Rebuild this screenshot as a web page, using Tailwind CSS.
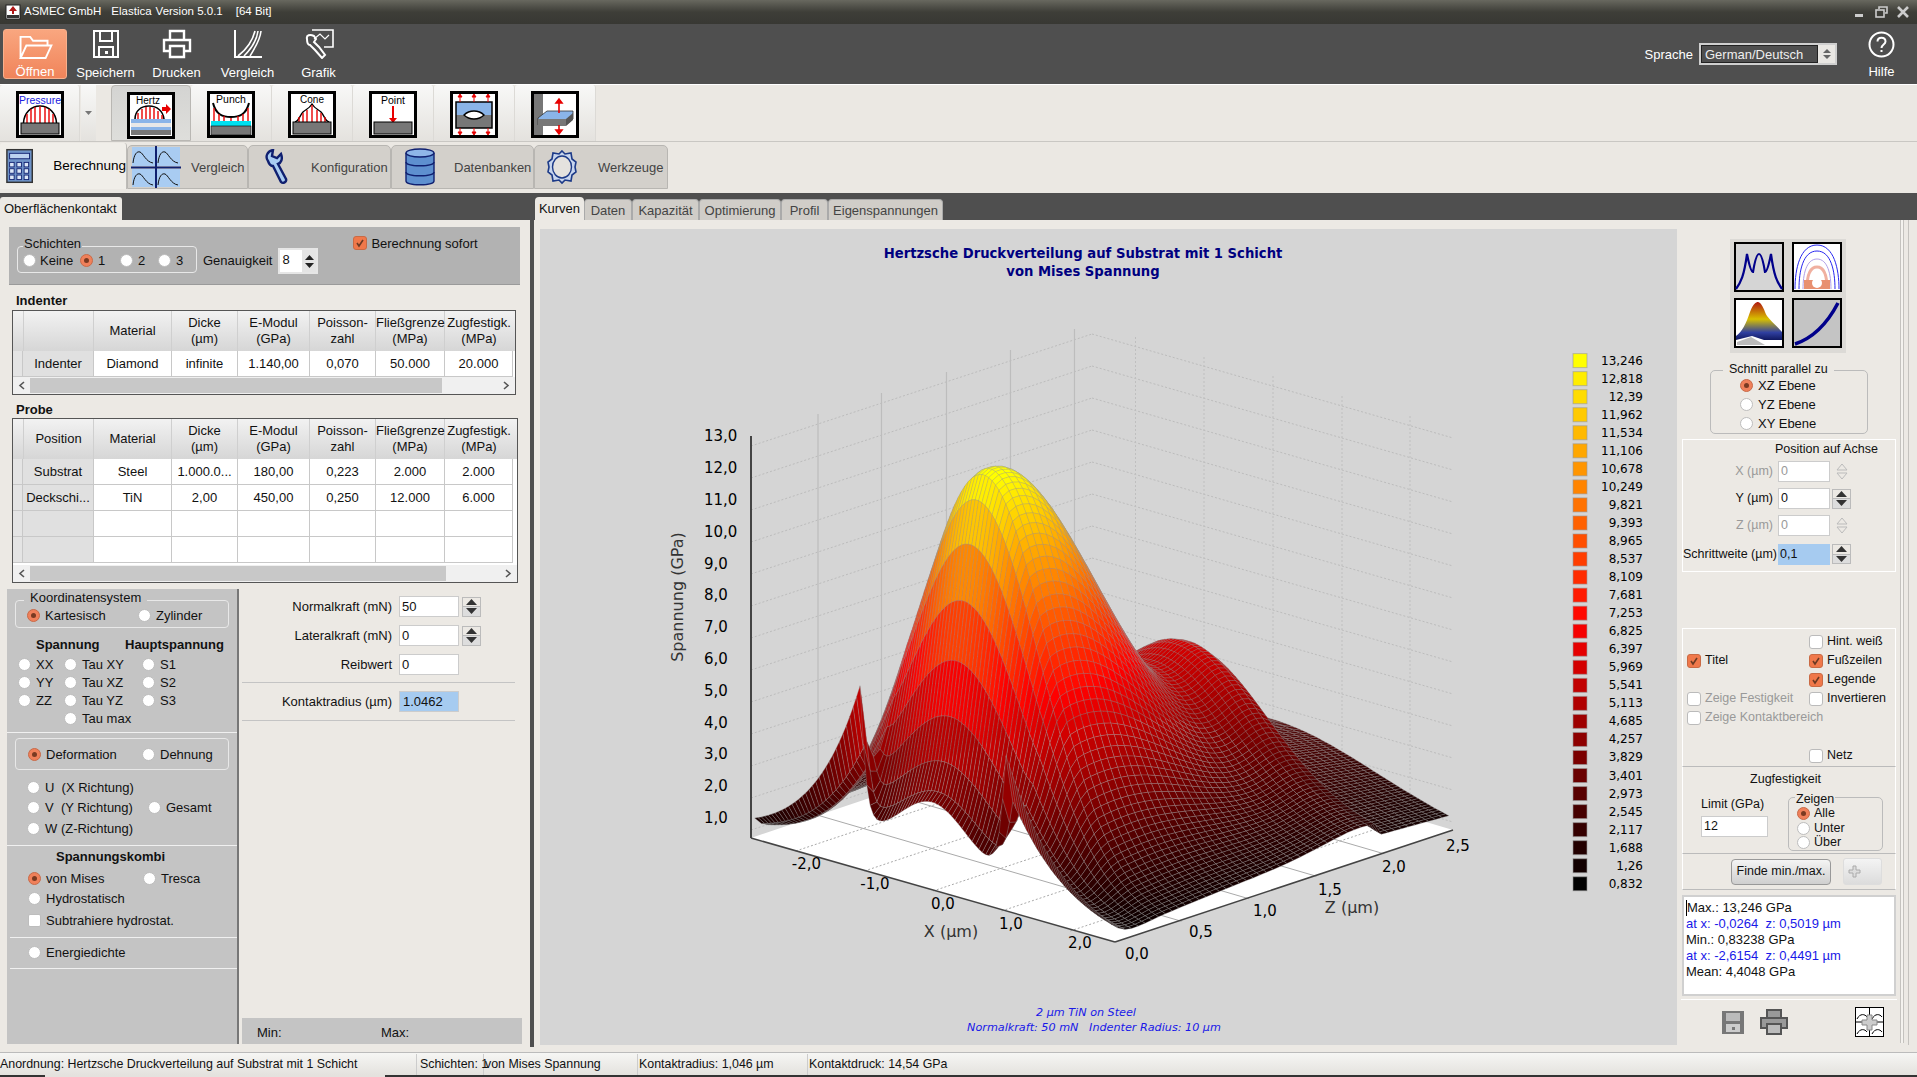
<!DOCTYPE html>
<html lang="de">
<head>
<meta charset="UTF-8" />
<title>ASMEC GmbH Elastica</title>
<script src="https://cdn.jsdelivr.net/npm/@tailwindcss/browser@4"></script>
</head>
<body class="w-[1917px] h-[1077px] overflow-hidden bg-[#4f4f4f] text-[13px] leading-none text-[#111] font-['Liberation_Sans',Arial,sans-serif]">

<!-- Title bar -->
<div class="h-[24px] flex items-center bg-linear-to-b from-[#68685f] via-[#3e3e38] to-[#383833] text-white text-[11.500px]">
  <svg class="ml-[5px] mr-[3px]" width="16" height="16" viewBox="0 0 16 16"><rect x="1" y="1" width="14" height="14" fill="#fff" stroke="#222"/><path d="M8 2l4 5H9v3H7V7H4z" fill="#b01818"/><rect x="2" y="11" width="12" height="3" fill="#333"/></svg>
  <span class="mr-[10px]">ASMEC GmbH</span><span class="mr-[4px]">Elastica</span><span class="mr-[13px]">Version 5.0.1</span><span>[64 Bit]</span>
  <div class="ml-auto flex items-center gap-[9px] mr-[8px]">
    <svg width="12" height="12" viewBox="0 0 12 12"><rect x="1" y="8" width="8" height="3" fill="#ccc"/></svg>
    <svg width="13" height="12" viewBox="0 0 13 12" fill="none" stroke="#ccc" stroke-width="1.6"><rect x="1" y="4" width="8" height="7"/><path d="M4 3V1h8v6h-2"/></svg>
    <svg width="12" height="12" viewBox="0 0 12 12" stroke="#ccc" stroke-width="2.6"><path d="M1 1l10 10M11 1L1 11"/></svg>
  </div>
</div>

<!-- Ribbon -->
<div class="h-[60px] flex items-center bg-[#4f4f4f] text-white text-[13px]">
  <button class="ml-[3px] mr-[3px] w-[64px] h-[50px] flex flex-col items-center pt-[4px] rounded-[3px] border border-[#f7b08d] bg-linear-to-b from-[#f9a67f] to-[#f0845a]">
    <svg width="36" height="27" viewBox="0 0 36 27" fill="none" stroke="#fff" stroke-width="2"><path d="M3 25V3h10l3 4h15v5M3 25l6-13h26l-6 13z"/></svg>
    <span class="mt-[5px]">Öffnen</span>
  </button>
  <button class="w-[71px] flex flex-col items-center">
    <svg width="28" height="30" viewBox="0 0 28 30" fill="none" stroke="#fff" stroke-width="2"><path d="M2 2h24v26H2z"/><path d="M8 2v10h12V2"/><path d="M7 28V18h14v10"/><rect x="13" y="22" width="3" height="3" fill="#fff" stroke="none"/></svg>
    <span class="mt-[7px]">Speichern</span>
  </button>
  <button class="w-[71px] flex flex-col items-center">
    <svg width="30" height="30" viewBox="0 0 30 30" fill="none" stroke="#fff" stroke-width="2.4"><path d="M8 11V2h14v9"/><path d="M8 22H2V11h26v11h-6"/><path d="M8 17h14v11H8z"/></svg>
    <span class="mt-[7px]">Drucken</span>
  </button>
  <button class="w-[71px] flex flex-col items-center">
    <svg width="30" height="30" viewBox="0 0 30 30" fill="none" stroke="#fff" stroke-width="1.6"><path d="M2 1v27h27" stroke-width="2"/><path d="M5 27C14 20 20 10 22 2M11 27C18 20 24 10 25 2M17 27C21 20 27 12 28 2"/></svg>
    <span class="mt-[7px]">Vergleich</span>
  </button>
  <button class="w-[71px] flex flex-col items-center">
    <svg width="30" height="30" viewBox="0 0 30 30" fill="none" stroke="#fff" stroke-width="1.6"><path d="M8 1h21v17h-9"/><path d="M10 10l6-5 5 5 4-4" stroke-width="1.2"/><path d="M3 10c-1-4 3-5 7-3l2 3-2 3 5 5 6 8-3 3-7-8-5-5c-2 0-3-3-3-6z" stroke-width="2"/></svg>
    <span class="mt-[7px]">Grafik</span>
  </button>
  <div class="ml-auto flex items-center mr-[14px]">
    <span class="mr-[6px]">Sprache</span>
    <div class="w-[138px] h-[22px] border-2 border-[#cfcfcf] flex bg-[#4f4f4f]">
      <span class="flex-1 border border-[#222] flex items-center pl-[3px] text-[#eee]">German/Deutsch</span>
      <span class="w-[17px] bg-[#e9e7e3] flex flex-col items-center justify-center gap-[2px]">
        <svg width="8" height="4" viewBox="0 0 8 4"><path d="M0 4L4 0l4 4z" fill="#666"/></svg>
        <svg width="8" height="4" viewBox="0 0 8 4"><path d="M0 0l4 4 4-4z" fill="#666"/></svg>
      </span>
    </div>
    <div class="w-[45px] ml-[22px] -mr-[1px] flex flex-col items-center">
      <svg width="27" height="27" viewBox="0 0 27 27" fill="none" stroke="#fff" stroke-width="2"><circle cx="13.5" cy="13.5" r="12"/><path d="M9.5 10.5c0-5 8-5 8 0 0 3-4 3-4 6.5"/><rect x="12.5" y="19" width="2" height="2" fill="#fff" stroke="none"/></svg>
      <span class="mt-[7px]">Hilfe</span>
    </div>
  </div>
</div>
<div class="h-px bg-white"></div>

<!-- Toolbar -->
<div class="h-[57px] flex bg-[#ebe8e3] border-b border-[#c9c7c3]">
  <div class="w-[80px] h-[56px] pt-[6px] flex justify-center rounded-t-[3px] bg-linear-to-b from-[#f8f8f7] to-[#e4e2de] border-r border-[#dcdad6]">
    <svg width="48" height="47" viewBox="0 0 48 47"><rect x="1.5" y="1.5" width="45" height="44" fill="#fff" stroke="#000" stroke-width="3"/><text x="24" y="13" text-anchor="middle" font-size="10.500" fill="#2020e0" font-family="Liberation Sans">Pressure</text><path d="M7.5 32C8 22 15 15 24 15s16 7 16.500 17" fill="none" stroke="#000" stroke-width="1.6"/><path d="M11 32V23M15 32V18M19 32V16M24 32V15M29 32V16M33 32V18M37 32V23" stroke="#e80000" stroke-width="1.4"/><rect x="5" y="32" width="38" height="11" fill="#777" stroke="#000"/></svg>
  </div>
  <div class="w-[15px] h-[56px] ml-[1px] flex items-center justify-center bg-linear-to-b from-[#f8f8f7] to-[#e4e2de]">
    <svg width="7" height="4" viewBox="0 0 7 4"><path d="M0 0h7L3.500 4z" fill="#777"/></svg>
  </div>
  <div class="w-[15px]"></div>
  <div class="w-[80px] h-[56px] pt-[6px] flex justify-center rounded-t-[4px] bg-linear-to-b from-[#d4d4d2] to-[#dededb] border border-[#b9b7b3]">
    <svg width="48" height="47" viewBox="0 0 48 47"><rect x="1.5" y="1.500" width="45" height="44" fill="#fff" stroke="#000" stroke-width="3"/><text x="21" y="12" text-anchor="middle" font-size="10" font-family="Liberation Sans">Hertz</text><path d="M8 27C8 19 14 14 22 14s14 5 15 13" fill="none" stroke="#000" stroke-width="1.6"/><path d="M11 27V21M15 27V17M19 27V15M23 27V15M27 27V16M31 27V19M35 27V23" stroke="#e80000" stroke-width="1.4"/><path d="M35 15h4v-3l5 5-5 5v-3h-4z" fill="#e80000"/><rect x="4" y="27" width="40" height="4" fill="#8ab4e8"/><rect x="4" y="31" width="40" height="4" fill="#e8e8e8"/><rect x="4" y="35" width="40" height="3" fill="#8ab4e8"/><rect x="4" y="38" width="40" height="5" fill="#777"/></svg>
  </div>
  <div class="w-[81px] h-[56px] pt-[6px] flex justify-center rounded-t-[3px] bg-linear-to-b from-[#f8f8f7] to-[#e4e2de] border-r border-[#dcdad6]">
    <svg width="48" height="47" viewBox="0 0 48 47"><rect x="1.5" y="1.5" width="45" height="44" fill="#fff" stroke="#000" stroke-width="3"/><text x="24" y="12" text-anchor="middle" font-size="10.500" font-family="Liberation Sans">Punch</text><path d="M6 12C9 24 16 26 24 26s15-2 18-14" fill="none" stroke="#000" stroke-width="2"/><path d="M7 30V17M12 30V23M17 30V25M24 30V27M31 30V25M36 30V23M41 30V17" stroke="#e80000" stroke-width="1.4"/><rect x="4" y="30" width="40" height="5" fill="#00e0f0"/><rect x="4" y="35" width="40" height="9" fill="#777" stroke="#000" stroke-width=".6"/></svg>
  </div>
  <div class="w-[81px] h-[56px] pt-[6px] flex justify-center rounded-t-[3px] bg-linear-to-b from-[#f8f8f7] to-[#e4e2de] border-r border-[#dcdad6]">
    <svg width="48" height="47" viewBox="0 0 48 47"><rect x="1.5" y="1.5" width="45" height="44" fill="#fff" stroke="#000" stroke-width="3"/><text x="24" y="12" text-anchor="middle" font-size="10" font-family="Liberation Sans">Cone</text><path d="M7 31C11 30 12 24 15 21S21 18 24 13c3 5 6 5 9 8s4 9 8 10" fill="none" stroke="#000" stroke-width="1.4"/><path d="M11 31V26M15 31V22M19 31V19M24 31V14M29 31V19M33 31V22M37 31V26" stroke="#e80000" stroke-width="1.4"/><rect x="5" y="31" width="38" height="12" fill="#777" stroke="#000"/></svg>
  </div>
  <div class="w-[81px] h-[56px] pt-[6px] flex justify-center rounded-t-[3px] bg-linear-to-b from-[#f8f8f7] to-[#e4e2de] border-r border-[#dcdad6]">
    <svg width="48" height="47" viewBox="0 0 48 47"><rect x="1.5" y="1.5" width="45" height="44" fill="#fff" stroke="#000" stroke-width="3"/><text x="24" y="13" text-anchor="middle" font-size="10.500" font-family="Liberation Sans">Point</text><path d="M23 15h2v12h3l-4 5-4-5h3z" fill="#e80000"/><rect x="5" y="31" width="38" height="12" fill="#777" stroke="#000"/></svg>
  </div>
  <div class="w-[81px] h-[56px] pt-[6px] flex justify-center rounded-t-[3px] bg-linear-to-b from-[#f8f8f7] to-[#e4e2de] border-r border-[#dcdad6]">
    <svg width="48" height="47" viewBox="0 0 48 47"><rect x="1.5" y="1.5" width="45" height="44" fill="#fff" stroke="#000" stroke-width="3"/><rect x="6" y="11" width="36" height="13" fill="#8ab4e8"/><rect x="6" y="24" width="36" height="13" fill="#777"/><rect x="6" y="11" width="36" height="26" fill="none" stroke="#000" stroke-width="1.5"/><path d="M14 24c3-3 6-4 10-4s7 1 10 4c-3 3-6 4-10 4s-7-1-10-4z" fill="#fff" stroke="#000" stroke-width="1.4"/><path d="M10 11V5M8 6l2-3 2 3zM24 11V5M22 6l2-3 2 3zM38 11V5M36 6l2-3 2 3zM10 37v5M8 41l2 3 2-3zM24 37v5M22 41l2 3 2-3zM38 37v5M36 41l2 3 2-3z" stroke="#e80000" fill="#e80000"/></svg>
  </div>
  <div class="w-[81px] h-[56px] pt-[6px] flex justify-center rounded-t-[3px] bg-linear-to-b from-[#f8f8f7] to-[#e4e2de] border-r border-[#dcdad6]">
    <svg width="48" height="47" viewBox="0 0 48 47"><rect x="1.5" y="1.5" width="45" height="44" fill="#fff" stroke="#000" stroke-width="3"/><rect x="3" y="3" width="9" height="41" fill="#777"/><path d="M7 27l9-7h26v8l-7 6H7z" fill="#8ab4e8" stroke="#333" stroke-width=".8"/><path d="M7 28h28v7H7z" fill="#777"/><path d="M35 28l7-6v7l-7 6z" fill="#555"/><path d="M28 22V10M25 12l3-4 3 4zM28 34v8M25 39l3 4 3-4z" stroke="#e80000" fill="#e80000" stroke-width="1.6"/></svg>
  </div>
</div>

<!-- Main tabs -->
<div class="h-[51px] pt-[3px] bg-[#ebe8e3] flex items-start">
  <div class="w-[127px] h-[46px] -mt-[2px] pl-[6px] flex items-center bg-[#f0eee9] rounded-t-[3px] border-r border-[#bdbbb7] text-black text-[13.5px]">
    <svg width="30" height="38" viewBox="0 0 30 38"><rect x="1" y="1" width="28" height="36" fill="#6f93c8" stroke="#333" stroke-width="1.6"/><rect x="4" y="5" width="22" height="6" fill="#bcd2f0" stroke="#102070"/><g fill="#dbe7f7" stroke="#102070"><rect x="4" y="15" width="5" height="5"/><rect x="12" y="15" width="5" height="5"/><rect x="20" y="15" width="5" height="5"/><rect x="4" y="22" width="5" height="5"/><rect x="12" y="22" width="5" height="5"/><rect x="20" y="22" width="5" height="5"/><rect x="4" y="29" width="5" height="5"/><rect x="12" y="29" width="5" height="5"/><rect x="20" y="29" width="5" height="5"/></g></svg>
    <span class="ml-[20px]">Berechnung</span>
  </div>
  <div class="w-[121px] h-[44px] flex items-center bg-[#d3d0cb] rounded-t-[5px] border border-[#b8b6b2] text-[#444]">
    <svg class="ml-[3px]" width="50" height="42" viewBox="0 0 50 42"><rect x="1" y="1" width="23" height="19" fill="#a9ccf2"/><rect x="26" y="1" width="23" height="19" fill="#a9ccf2"/><rect x="1" y="23" width="23" height="18" fill="#a9ccf2"/><rect x="26" y="23" width="23" height="18" fill="#a9ccf2"/><path d="M2 17C3 8 6 5 9 6s6 10 13 11M27 17c1-9 4-12 7-11s6 10 13 11M2 39c1-9 4-12 7-11s6 10 13 11M27 39c1-9 4-12 7-11s6 10 13 11" fill="none" stroke="#111" stroke-width="1"/><path d="M0 21.500h50M25 0v42" stroke="#102070" stroke-width="2"/></svg>
    <span class="ml-[10px]">Vergleich</span>
  </div>
  <div class="w-[143px] h-[44px] flex items-center bg-[#d3d0cb] rounded-t-[5px] border border-[#b8b6b2] text-[#444]">
    <svg class="ml-[15px]" width="26" height="36" viewBox="0 0 26 36"><path d="M4 12C1 8 3 2 9 1l-1 6 5 2 4-4c2 5 0 9-3 10l8 15c1 3-3 5-5 3l-8-16c-2 0-4-2-5-5z" fill="#a9ccf2" stroke="#102070" stroke-width="2.4"/></svg>
    <span class="ml-[21px]">Konfiguration</span>
  </div>
  <div class="w-[143px] h-[44px] flex items-center bg-[#d3d0cb] rounded-t-[5px] border border-[#b8b6b2] text-[#444]">
    <svg class="ml-[13px]" width="30" height="38" viewBox="0 0 30 38" fill="#5e90d0" stroke="#102070" stroke-width="1.4"><path d="M1 5v28c0 5 28 5 28 0V5"/><ellipse cx="15" cy="5" rx="14" ry="4" fill="#8fb6e8"/><path d="M1 14c0 5 28 5 28 0M1 24c0 5 28 5 28 0" fill="none"/></svg>
    <span class="ml-[19px]">Datenbanken</span>
  </div>
  <div class="w-[134px] h-[44px] flex items-center bg-[#d3d0cb] rounded-t-[5px] border border-[#b8b6b2] text-[#444]">
    <svg class="ml-[11px]" width="32" height="36" viewBox="0 0 32 36" fill="none" stroke="#1c3a88"><path d="M16 2l3 3 6-1 1 6 4 3-1 5 1 5-4 3-1 6-6-1-3 3-3-3-6 1-1-6-4-3 1-5-1-5 4-3 1-6 6 1z" stroke-width="1.600" fill="#c8d6ee"/><ellipse cx="16" cy="18" rx="9.500" ry="11" fill="#e4e2de" stroke-width="1.400"/></svg>
    <span class="ml-[20px]">Werkzeuge</span>
  </div>
</div>

<!-- Main area -->
<div class="h-[854px] flex bg-[#4f4f4f]">
  <!-- Left pane -->
  <div class="w-[530px]">
    <div class="h-[27px] flex items-end">
      <div class="w-[122px] h-[23px] flex items-center pl-[4px] bg-[#ece9e4] rounded-t-[3px] text-[13px]">Oberflächenkontakt</div>
    </div>
    <div class="h-[827px] bg-[#ece9e4] pt-[7px]">
      <!-- Schichten -->
      <div class="ml-[9px] w-[511px] h-[58px] bg-[#b2b2b2] relative flex items-start border-b border-[#9a9a9a]">
        <div class="relative ml-[8px] mt-[19px] w-[180px] h-[27px] pt-[1px] border border-[#e8e8e8] rounded-[4px] flex items-center">
          <span class="absolute -top-[10px] left-[5px] px-[1px] bg-[#b2b2b2]">Schichten</span>
          <span class="ml-[5px] w-[13px] h-[13px] rounded-full bg-white border border-[#bdbdbd] shrink-0"></span><span class="ml-[4px] w-[36px]">Keine</span>
          <span class="ml-[4px] w-[13px] h-[13px] rounded-full bg-[#f0805a] border border-[#c86a48] flex items-center justify-center shrink-0"><span class="w-[5px] h-[5px] rounded-full bg-[#7a3a22]"></span></span><span class="ml-[5px] w-[22px]">1</span>
          <span class="w-[13px] h-[13px] rounded-full bg-white border border-[#bdbdbd] shrink-0"></span><span class="ml-[5px] w-[20px]">2</span>
          <span class="w-[13px] h-[13px] rounded-full bg-white border border-[#bdbdbd] shrink-0"></span><span class="ml-[5px]">3</span>
        </div>
        <span class="ml-[6px] mt-[27px]">Genauigkeit</span>
        <div class="ml-[6px] mt-[21px] w-[40px] h-[26px] bg-white border-2 border-[#e6e6e6] flex">
          <span class="flex-1 pl-[2px] pt-[3px]">8</span>
          <span class="w-[14px] flex flex-col items-center justify-center gap-[3px] bg-[#e4e4e4]">
            <svg width="9" height="5" viewBox="0 0 9 5"><path d="M0 5l4.500-5L9 5z" fill="#222"/></svg>
            <svg width="9" height="5" viewBox="0 0 9 5"><path d="M0 0l4.500 5L9 0z" fill="#222"/></svg>
          </span>
        </div>
        <span class="ml-[35px] mt-[9px] w-[14px] h-[14px] rounded-[3px] bg-[#f0784a] border border-[#c96a44] flex items-center justify-center"><svg width="10" height="10" viewBox="0 0 10 10"><path d="M2 5l2 3 4-6" fill="none" stroke="#6b3a24" stroke-width="1.6"/></svg></span>
        <span class="ml-[4px] mt-[10px]">Berechnung sofort</span>
      </div>

      <!-- Indenter table -->
      <div class="ml-[16px] h-[25px] pt-[9px] font-bold">Indenter</div>
      <div class="ml-[12px] w-[504px] h-[85px] border border-[#555] bg-white flex flex-col">
        <div class="grid grid-cols-[10px_71px_78px_66px_72px_66px_69px_68px] h-[40px] bg-linear-to-b from-[#f2f2f2] to-[#d6d6d6] text-center leading-[16px]">
          <span></span><span class="border-l border-r border-[#cfcfcf]"></span><span class="flex items-center justify-center border-r border-[#cfcfcf]">Material</span><span class="pt-[4px] border-r border-[#cfcfcf]">Dicke<br>(µm)</span><span class="pt-[4px] border-r border-[#cfcfcf]">E-Modul<br>(GPa)</span><span class="pt-[4px] border-r border-[#cfcfcf]">Poisson-<br>zahl</span><span class="pt-[4px] border-r border-[#cfcfcf] whitespace-nowrap">Fließgrenze<br>(MPa)</span><span class="pt-[4px] whitespace-nowrap">Zugfestigk.<br>(MPa)</span>
        </div>
        <div class="grid grid-cols-[10px_71px_78px_66px_72px_66px_69px_68px] h-[26px] text-center [&>span]:border-r [&>span]:border-b [&>span]:border-[#c8c8c8] [&>span]:flex [&>span]:items-center [&>span]:justify-center">
          <span class="bg-[#e4e4e4]"></span><span class="bg-[#e0e0e0]">Indenter</span><span>Diamond</span><span>infinite</span><span>1.140,00</span><span>0,070</span><span>50.000</span><span>20.000</span>
        </div>
        <div class="h-[17px] mt-auto flex items-center bg-[#f0f0f0]">
          <svg class="mx-[5px]" width="7" height="9" viewBox="0 0 7 9"><path d="M6 1L2 4.500 6 8" fill="none" stroke="#555" stroke-width="1.600"/></svg>
          <span class="w-[412px] h-[15px] bg-[#c8c8c8]"></span>
          <svg class="ml-auto mr-[5px]" width="7" height="9" viewBox="0 0 7 9"><path d="M1 1l4 3.500L1 8" fill="none" stroke="#555" stroke-width="1.600"/></svg>
        </div>
      </div>

      <!-- Probe table -->
      <div class="ml-[16px] h-[23px] pt-[8px] font-bold">Probe</div>
      <div class="ml-[12px] w-[506px] h-[165px] border border-[#555] bg-white flex flex-col overflow-hidden">
        <div class="grid grid-cols-[10px_71px_78px_66px_72px_66px_69px_68px] h-[40px] shrink-0 bg-linear-to-b from-[#f2f2f2] to-[#d6d6d6] text-center leading-[16px]">
          <span></span><span class="flex items-center justify-center border-l border-r border-[#cfcfcf]">Position</span><span class="flex items-center justify-center border-r border-[#cfcfcf]">Material</span><span class="pt-[4px] border-r border-[#cfcfcf]">Dicke<br>(µm)</span><span class="pt-[4px] border-r border-[#cfcfcf]">E-Modul<br>(GPa)</span><span class="pt-[4px] border-r border-[#cfcfcf]">Poisson-<br>zahl</span><span class="pt-[4px] border-r border-[#cfcfcf] whitespace-nowrap">Fließgrenze<br>(MPa)</span><span class="pt-[4px] whitespace-nowrap">Zugfestigk.<br>(MPa)</span>
        </div>
        <div class="grid grid-cols-[10px_71px_78px_66px_72px_66px_69px_68px] h-[26px] shrink-0 text-center [&>span]:border-r [&>span]:border-b [&>span]:border-[#c8c8c8] [&>span]:flex [&>span]:items-center [&>span]:justify-center">
          <span class="bg-[#e4e4e4]"></span><span class="bg-[#e0e0e0]">Substrat</span><span>Steel</span><span>1.000.0...</span><span>180,00</span><span>0,223</span><span>2.000</span><span>2.000</span>
        </div>
        <div class="grid grid-cols-[10px_71px_78px_66px_72px_66px_69px_68px] h-[26px] shrink-0 text-center [&>span]:border-r [&>span]:border-b [&>span]:border-[#c8c8c8] [&>span]:flex [&>span]:items-center [&>span]:justify-center">
          <span class="bg-[#e4e4e4]"></span><span class="bg-[#e0e0e0]">Deckschi...</span><span>TiN</span><span>2,00</span><span>450,00</span><span>0,250</span><span>12.000</span><span>6.000</span>
        </div>
        <div class="grid grid-cols-[10px_71px_78px_66px_72px_66px_69px_68px] h-[26px] shrink-0 [&>span]:border-r [&>span]:border-b [&>span]:border-[#c8c8c8]">
          <span class="bg-[#e4e4e4]"></span><span class="bg-[#e0e0e0]"></span><span></span><span></span><span></span><span></span><span></span><span></span>
        </div>
        <div class="grid grid-cols-[10px_71px_78px_66px_72px_66px_69px_68px] h-[26px] shrink-0 [&>span]:border-r [&>span]:border-b [&>span]:border-[#c8c8c8]">
          <span class="bg-[#e4e4e4]"></span><span class="bg-[#e0e0e0]"></span><span></span><span></span><span></span><span></span><span></span><span></span>
        </div>
        <div class="h-[17px] mt-auto shrink-0 flex items-center bg-[#f0f0f0]">
          <svg class="mx-[5px]" width="7" height="9" viewBox="0 0 7 9"><path d="M6 1L2 4.500 6 8" fill="none" stroke="#555" stroke-width="1.600"/></svg>
          <span class="w-[416px] h-[15px] bg-[#c8c8c8]"></span>
          <svg class="ml-auto mr-[5px]" width="7" height="9" viewBox="0 0 7 9"><path d="M1 1l4 3.500L1 8" fill="none" stroke="#555" stroke-width="1.600"/></svg>
        </div>
      </div>

      <div class="flex mt-[6px] h-[455px]">
        <!-- Stress selection -->
        <div class="ml-[7px] w-[230px] bg-[#c4c4c4] pt-[11px]">
          <div class="relative ml-[8px] w-[214px] h-[28px] pt-[3px] border border-[#e8e8e8] rounded-[4px] flex items-center pl-[11px]">
            <span class="absolute -top-[10px] left-[8px] px-[6px] bg-[#c4c4c4]">Koordinatensystem</span>
            <span class="w-[13px] h-[13px] rounded-full bg-[#f0805a] border border-[#c86a48] flex items-center justify-center shrink-0"><span class="w-[5px] h-[5px] rounded-full bg-[#7a3a22]"></span></span><span class="ml-[5px] w-[93px]">Kartesisch</span>
            <span class="w-[13px] h-[13px] rounded-full bg-white border border-[#bdbdbd] shrink-0"></span><span class="ml-[5px]">Zylinder</span>
          </div>
          <div class="flex h-[16px] mt-[8px] font-bold items-center"><span class="ml-[29px] w-[89px]">Spannung</span><span>Hauptspannung</span></div>
          <div class="grid grid-cols-[46px_78px_auto] pl-[11px] mt-[3px] auto-rows-[18px] items-center [&>div]:flex [&>div]:items-center [&>div]:gap-[5px] [&_i]:w-[13px] [&_i]:h-[13px] [&_i]:rounded-full [&_i]:bg-white [&_i]:border [&_i]:border-[#bdbdbd]">
            <div><i></i>XX</div><div><i></i>Tau XY</div><div><i></i>S1</div>
            <div><i></i>YY</div><div><i></i>Tau XZ</div><div><i></i>S2</div>
            <div><i></i>ZZ</div><div><i></i>Tau YZ</div><div><i></i>S3</div>
            <div></div><div class="mt-[1px]"><i></i>Tau max</div><div></div>
          </div>
          <div class="mt-[5px] border-t border-[#f0f0f0]"></div>
          <div class="ml-[8px] mt-[5px] w-[214px] h-[32px] border border-[#e8e8e8] rounded-[4px] flex items-center pl-[12px]">
            <span class="w-[13px] h-[13px] rounded-full bg-[#f0805a] border border-[#c86a48] flex items-center justify-center shrink-0"><span class="w-[5px] h-[5px] rounded-full bg-[#7a3a22]"></span></span><span class="ml-[5px] w-[96px]">Deformation</span>
            <span class="w-[13px] h-[13px] rounded-full bg-white border border-[#bdbdbd] shrink-0"></span><span class="ml-[5px]">Dehnung</span>
          </div>
          <div class="mt-[7px] pl-[20px] flex flex-col [&>div]:h-[20.500px] [&>div]:flex [&>div]:items-center [&>div]:gap-[5px] [&_i]:w-[13px] [&_i]:h-[13px] [&_i]:rounded-full [&_i]:bg-white [&_i]:border [&_i]:border-[#bdbdbd]">
            <div><i></i><span class="whitespace-pre">U  (X Richtung)</span></div>
            <div><i></i><span class="whitespace-pre w-[97px]">V  (Y Richtung)</span><i class="ml-[1px]"></i><span>Gesamt</span></div>
            <div><i></i><span class="whitespace-pre">W (Z-Richtung)</span></div>
          </div>
          <div class="mt-[6px] border-t border-[#f0f0f0]"></div>
          <div class="h-[22px] pl-[49px] flex items-center font-bold">Spannungskombi</div>
          <div class="pl-[21px] flex flex-col [&>div]:flex [&>div]:items-center [&_i]:w-[13px] [&_i]:h-[13px] [&_i]:rounded-full [&_i]:bg-white [&_i]:border [&_i]:border-[#bdbdbd]">
            <div class="h-[20px] mt-[1px]"><span class="w-[13px] h-[13px] rounded-full bg-[#f0805a] border border-[#c86a48] flex items-center justify-center shrink-0"><span class="w-[5px] h-[5px] rounded-full bg-[#7a3a22]"></span></span><span class="ml-[5px] w-[97px]">von Mises</span><i></i><span class="ml-[5px]">Tresca</span></div>
            <div class="h-[20px]"><i></i><span class="ml-[5px]">Hydrostatisch</span></div>
            <div class="h-[24px]"><span class="w-[13px] h-[13px] bg-white border border-[#bdbdbd] rounded-[2px]"></span><span class="ml-[5px]">Subtrahiere hydrostat.</span></div>
          </div>
          <div class="ml-[3px] mt-[4px] border-t border-[#f0f0f0]"></div>
          <div class="h-[30px] pl-[21px] flex items-center"><span class="w-[13px] h-[13px] rounded-full bg-white border border-[#bdbdbd]"></span><span class="ml-[5px]">Energiedichte</span></div>
          <div class="ml-[3px] border-t border-[#f0f0f0]"></div>
        </div>
        <div class="w-[2px] bg-[#777]"></div>
        <!-- Load inputs -->
        <div class="w-[285px] flex flex-col">
          <div class="pt-[7px] grid grid-cols-[153px_60px_auto] gap-x-[7px] auto-rows-[21px] gap-y-[8px] items-center">
            <span class="text-right">Normalkraft (mN)</span><span class="h-[21px] bg-white border border-[#ccc] flex items-center pl-[2px]">50</span>
            <div class="-ml-[4px] w-[19px] h-[20px] flex flex-col border border-[#bbb]"><span class="flex-1 flex items-center justify-center"><svg width="11" height="6" viewBox="0 0 11 6"><path d="M0 6l5.500-6L11 6z" fill="#333"/></svg></span><span class="flex-1 flex items-center justify-center border-t border-[#bbb] bg-[#ddd]"><svg width="11" height="6" viewBox="0 0 11 6"><path d="M0 0l5.500 6L11 0z" fill="#333"/></svg></span></div>
            <span class="text-right">Lateralkraft (mN)</span><span class="h-[21px] bg-white border border-[#ccc] flex items-center pl-[2px]">0</span>
            <div class="-ml-[4px] w-[19px] h-[20px] flex flex-col border border-[#bbb]"><span class="flex-1 flex items-center justify-center"><svg width="11" height="6" viewBox="0 0 11 6"><path d="M0 6l5.500-6L11 6z" fill="#333"/></svg></span><span class="flex-1 flex items-center justify-center border-t border-[#bbb] bg-[#ddd]"><svg width="11" height="6" viewBox="0 0 11 6"><path d="M0 0l5.500 6L11 0z" fill="#333"/></svg></span></div>
            <span class="text-right">Reibwert</span><span class="h-[21px] bg-white border border-[#ccc] flex items-center pl-[2px]">0</span><span></span>
          </div>
          <div class="ml-[3px] w-[273px] mt-[7px] border-t border-[#c4c4c4]"></div>
          <div class="mt-[8px] grid grid-cols-[153px_60px] gap-x-[7px] items-center">
            <span class="text-right">Kontaktradius (µm)</span><span class="h-[21px] bg-[#a6cbf0] border border-[#ccc] flex items-center pl-[3px]">1.0462</span>
          </div>
          <div class="ml-[3px] w-[273px] mt-[8px] border-t border-[#c4c4c4]"></div>
          <div class="mt-auto ml-[3px] w-[280px] h-[26px] pt-[2px] bg-[#c4c4c4] flex items-center">
            <span class="ml-[15px] w-[124px]">Min:</span><span>Max:</span>
          </div>
        </div>
      </div>
    </div>
  </div>

  <div class="w-[4px]"></div>

  <!-- Right pane -->
  <div class="w-[1383px]">
    <div class="h-[27px] flex items-end pl-[1px] text-[#444]">
      <div class="w-[49px] h-[23px] flex items-center justify-center bg-[#ece9e4] rounded-t-[4px] text-[#111]">Kurven</div>
      <div class="w-[48px] h-[21px] flex items-center justify-center bg-[#d0cdc8] rounded-t-[4px] border border-[#aaa] border-b-0">Daten</div>
      <div class="w-[67px] h-[21px] flex items-center justify-center bg-[#d0cdc8] rounded-t-[4px] border border-[#aaa] border-b-0">Kapazität</div>
      <div class="w-[82px] h-[21px] flex items-center justify-center bg-[#d0cdc8] rounded-t-[4px] border border-[#aaa] border-b-0">Optimierung</div>
      <div class="w-[47px] h-[21px] flex items-center justify-center bg-[#d0cdc8] rounded-t-[4px] border border-[#aaa] border-b-0">Profil</div>
      <div class="w-[115px] h-[21px] flex items-center justify-center bg-[#d0cdc8] rounded-t-[4px] border border-[#aaa] border-b-0">Eigenspannungen</div>
    </div>
    <div class="h-[827px] bg-[#ece9e4] flex pl-[6px] pt-[9px]">
      <!-- Plot -->
      <svg id="plot" class="shrink-0 bg-[#d5d5d5]" width="1137" height="816" viewBox="540 229 1137 816" font-family="DejaVu Sans"></svg>

      <!-- Side panel -->
      <div class="w-[223px] -mt-[9px] shrink-0 flex flex-col">
        <div class="ml-[53px] mt-[19px] w-[116px] h-[114px] bg-[#dcdad6] grid grid-cols-[58px_58px] grid-rows-[56px_56px] justify-items-center items-center">
          <svg width="50" height="50" viewBox="0 0 50 50" class="bg-[#d5d5d5]"><rect x="1" y="1" width="48" height="48" fill="none" stroke="#000" stroke-width="2"/><path d="M2 47C7 40 10 34 13 12c2 10 4 18 6 18 1-6 3-18 6-18s5 12 6 18c2 0 4-8 6-18 3 22 6 28 11 35" fill="none" stroke="#00008b" stroke-width="2.200"/></svg>
          <svg width="50" height="50" viewBox="0 0 50 50" fill="none" class="bg-white"><rect x="1" y="1" width="48" height="48" stroke="#000" stroke-width="2"/><path d="M3 47c0-20 5-44 22-44s22 24 22 44M7 47c0-18 4-38 18-38s18 20 18 38" stroke="#2828f0"/><path d="M11 47c0-14 3-30 14-30s14 16 14 30" stroke="#b0a0e8"/><path d="M15 47c0-12 2-22 10-22s10 10 10 22" stroke="#f0b0a0" stroke-width="3"/><path d="M12 47V38h26v9z" fill="#e89070"/><circle cx="25" cy="41" r="5" fill="#fff"/></svg>
          <svg width="50" height="50" viewBox="0 0 50 50" class="bg-white"><defs><linearGradient id="mini" x1="0" y1="0" x2="0" y2="1"><stop offset="0" stop-color="#b01810"/><stop offset=".45" stop-color="#d8c000"/><stop offset=".8" stop-color="#3040a0"/><stop offset="1" stop-color="#101860"/></linearGradient></defs><path d="M2 38c6-4 10-12 14-24 3-8 6-10 8-10s5 4 7 10c2 6 8 10 17 20v8H30L18 38 2 42z" fill="url(#mini)"/><path d="M3 44l14-5 14 8H3z" fill="#bbb"/><rect x="1" y="1" width="48" height="48" fill="none" stroke="#000" stroke-width="2"/></svg>
          <svg width="50" height="50" viewBox="0 0 50 50" class="bg-[#c4c4c4]"><path d="M3 46c18-6 32-20 43-41" fill="none" stroke="#00008b" stroke-width="3.500"/><rect x="1" y="1" width="48" height="48" fill="none" stroke="#000" stroke-width="2"/></svg>
        </div>

        <div class="relative ml-[33px] mt-[17px] w-[158px] h-[64px] border border-[#bbb] rounded-[5px] pl-[29px] pt-[8px] flex flex-col gap-[6px] [&>div]:flex [&>div]:items-center [&>div]:gap-[5px] [&>div]:h-[13px]">
          <span class="absolute -top-[8px] left-[12px] px-[6px] bg-[#ece9e4] text-[12.500px]">Schnitt parallel zu</span>
          <div><span class="w-[13px] h-[13px] rounded-full bg-[#f0805a] border border-[#c86a48] flex items-center justify-center"><span class="w-[5px] h-[5px] rounded-full bg-[#7a3a22]"></span></span>XZ Ebene</div>
          <div><span class="w-[13px] h-[13px] rounded-full bg-white border border-[#bdbdbd]"></span>YZ Ebene</div>
          <div><span class="w-[13px] h-[13px] rounded-full bg-white border border-[#bdbdbd]"></span>XY Ebene</div>
        </div>

        <div class="ml-[5px] mt-[5px] w-[214px] h-[133px] border border-white flex flex-col text-[12.500px]">
          <div class="h-[19px] pl-[92px] flex items-center">Position auf Achse</div>
          <div class="grid grid-cols-[90px_52px_auto] gap-x-[5px] auto-rows-[21px] gap-y-[6px] items-center mt-[2px]">
            <span class="text-right text-[#999]">X (µm)</span><span class="h-[21px] bg-white border border-[#ccc] text-[#999] flex items-center pl-[2px]">0</span><div class="ml-[1px] flex flex-col gap-[1px]"><svg width="12" height="8" viewBox="0 0 12 8"><path d="M1 7l5-6 5 6z" fill="none" stroke="#bbb"/></svg><svg width="12" height="8" viewBox="0 0 12 8"><path d="M1 1l5 6 5-6z" fill="none" stroke="#bbb"/></svg></div>
            <span class="text-right">Y (µm)</span><span class="h-[21px] bg-white border border-[#ccc] flex items-center pl-[2px]">0</span><div class="-ml-[3px] w-[19px] h-[20px] flex flex-col border border-[#bbb]"><span class="flex-1 flex items-center justify-center"><svg width="11" height="6" viewBox="0 0 11 6"><path d="M0 6l5.500-6L11 6z" fill="#333"/></svg></span><span class="flex-1 flex items-center justify-center border-t border-[#bbb] bg-[#ddd]"><svg width="11" height="6" viewBox="0 0 11 6"><path d="M0 0l5.500 6L11 0z" fill="#333"/></svg></span></div>
            <span class="text-right text-[#999]">Z (µm)</span><span class="h-[21px] bg-white border border-[#ccc] text-[#999] flex items-center pl-[2px]">0</span><div class="ml-[1px] flex flex-col gap-[1px]"><svg width="12" height="8" viewBox="0 0 12 8"><path d="M1 7l5-6 5 6z" fill="none" stroke="#bbb"/></svg><svg width="12" height="8" viewBox="0 0 12 8"><path d="M1 1l5 6 5-6z" fill="none" stroke="#bbb"/></svg></div>
            <span class="text-right whitespace-nowrap mt-[3px]">Schrittweite (µm)</span><span class="h-[21px] mt-[3px] bg-[#a6cbf0] flex items-center pl-[2px]">0,1</span><div class="-ml-[3px] mt-[3px] w-[19px] h-[20px] flex flex-col border border-[#bbb]"><span class="flex-1 flex items-center justify-center"><svg width="11" height="6" viewBox="0 0 11 6"><path d="M0 6l5.500-6L11 6z" fill="#333"/></svg></span><span class="flex-1 flex items-center justify-center border-t border-[#bbb] bg-[#ddd]"><svg width="11" height="6" viewBox="0 0 11 6"><path d="M0 0l5.500 6L11 0z" fill="#333"/></svg></span></div>
          </div>
        </div>

        <!-- Display options -->
        <div class="ml-[5px] mt-[56px] w-[214px] h-[139px] border border-white border-b-[#bbb] grid grid-cols-[122px_auto] text-[12.500px] pt-[3px] auto-rows-[19px] [&>div]:flex [&>div]:items-center [&>div]:gap-[4px] [&_i]:w-[14px] [&_i]:h-[14px] [&_i]:rounded-[3px] [&_i]:bg-white [&_i]:border [&_i]:border-[#bbb] [&_b]:w-[14px] [&_b]:h-[14px] [&_b]:rounded-[3px] [&_b]:bg-[#f0784a] [&_b]:border [&_b]:border-[#c96a44] [&_b]:flex [&_b]:items-center [&_b]:justify-center">
          <div class="col-start-2 ml-[4px]"><i></i>Hint. weiß</div>
          <div class="ml-[4px]"><b><svg width="10" height="10" viewBox="0 0 10 10"><path d="M2 5l2 3 4-6" fill="none" stroke="#6b3a24" stroke-width="1.600"/></svg></b>Titel</div>
          <div class="ml-[4px]"><b><svg width="10" height="10" viewBox="0 0 10 10"><path d="M2 5l2 3 4-6" fill="none" stroke="#6b3a24" stroke-width="1.600"/></svg></b>Fußzeilen</div>
          <div class="col-start-2 ml-[4px]"><b><svg width="10" height="10" viewBox="0 0 10 10"><path d="M2 5l2 3 4-6" fill="none" stroke="#6b3a24" stroke-width="1.600"/></svg></b>Legende</div>
          <div class="ml-[4px] text-[#999]"><i></i>Zeige Festigkeit</div>
          <div class="ml-[4px]"><i></i>Invertieren</div>
          <div class="ml-[4px] col-span-2 text-[#999]"><i></i>Zeige Kontaktbereich</div>
          <div class="col-span-2 h-[19px]"></div>
          <div class="col-start-2 ml-[4px]"><i></i>Netz</div>
        </div>

        <div class="ml-[5px] w-[214px] h-[87px] border-x border-white border-b border-b-[#bbb] flex text-[12.500px] relative">
          <div class="w-[105px] flex flex-col pl-[18px] pt-[31px]">
            <span>Limit (GPa)</span>
            <span class="mt-[5px] w-[67px] h-[21px] bg-white border border-[#ccc] flex items-center pl-[2px]">12</span>
          </div>
          <span class="absolute top-[6px] left-0 right-[7px] text-center">Zugfestigkeit</span>
          <div class="relative mt-[30px] w-[95px] h-[54px] border border-[#bbb] rounded-[5px] pl-[8px] pt-[8px] flex flex-col [&>div]:h-[15px] [&>div]:flex [&>div]:items-center [&>div]:gap-[4px]">
            <span class="absolute -top-[5px] left-[6px] px-[1px] bg-[#ece9e4]">Zeigen</span>
            <div><span class="w-[13px] h-[13px] rounded-full bg-[#f0805a] border border-[#c86a48] flex items-center justify-center"><span class="w-[5px] h-[5px] rounded-full bg-[#7a3a22]"></span></span>Alle</div>
            <div><span class="w-[13px] h-[13px] rounded-full bg-white border border-[#bdbdbd]"></span>Unter</div>
            <div><span class="w-[13px] h-[13px] rounded-full bg-white border border-[#bdbdbd]"></span>Über</div>
          </div>
        </div>

        <div class="ml-[5px] w-[214px] h-[36px] border-x border-white border-b border-b-[#bbb] flex items-center pl-[48px]">
          <button class="w-[100px] h-[26px] rounded-[4px] border border-[#999] bg-linear-to-b from-[#f4f4f4] to-[#cfcfcf] text-[12.500px]">Finde min./max.</button>
          <span class="ml-[12px] w-[39px] h-[27px] rounded-[3px] border border-[#ddd] bg-linear-to-b from-[#f4f4f4] to-[#dcdcdc] flex items-center pl-[4px]"><svg width="13" height="13" viewBox="0 0 13 13"><path d="M5 1h3v4h4v3H8v4H5V8H1V5h4z" fill="#ddd" stroke="#aaa"/></svg></span>
        </div>

        <div class="ml-[5px] mt-[5px] w-[214px] h-[101px] bg-white border-2 border-[#d0d0d0] pl-[2px] pt-[3px] flex flex-col leading-[16px] text-[13px]">
          <span class="border-l border-black">Max.: 13,246 GPa</span>
          <span class="text-[#1818e8] whitespace-pre">at x: -0,0264  z: 0,5019 µm</span>
          <span>Min.: 0,83238 GPa</span>
          <span class="text-[#1818e8] whitespace-pre">at x: -2,6154  z: 0,4491 µm</span>
          <span>Mean: 4,4048 GPa</span>
        </div>

        <div class="ml-[4px] mt-[3px] w-[216px] h-[45px] border-t border-[#fff] flex items-center">
          <svg class="ml-[41px]" width="22" height="23" viewBox="0 0 22 23" fill="#777"><path d="M0 0h22v23H0z"/><path d="M4 2h14v8H4z" fill="#bbb"/><path d="M4 13h14v8H4z" fill="#ccc"/><rect x="10" y="16" width="3" height="3"/></svg>
          <svg class="ml-[16px]" width="28" height="26" viewBox="0 0 28 26" fill="#999" stroke="#555" stroke-width="2"><path d="M7 9V1h14v8"/><path d="M7 19H1V9h26v10h-6"/><path d="M7 15h14v10H7z" fill="#bbb"/></svg>
          <svg class="ml-[67px]" width="29" height="30" viewBox="0 0 29 30"><rect x=".5" y=".5" width="28" height="29" fill="#fff" stroke="#000"/><path d="M0 15h29M14.500 0v30" stroke="#000"/><path d="M2 12c3-6 8-5 10-2M17 12c3-6 8-5 10-2M2 27c3-6 8-5 10-2M17 27c3-6 8-5 10-2" fill="none" stroke="#000"/><path d="M12 8h5v5h5v5h-5v5h-5v-5H7v-5h5z" fill="#ccc" stroke="#888"/></svg>
        </div>
      </div>

      <!-- Outer frame -->
      <div class="w-[17px] -mt-[9px] shrink-0 flex">
        <div class="w-[4px] h-[823px] border-x border-[#c4c2be] bg-[#f4f2ee]"></div>
        <div class="w-[5px] h-[825px] border-r border-[#c4c2be]"></div>
      </div>
    </div>
  </div>
</div>

<!-- Status bar -->
<div class="h-[6px] bg-[#ece9e4] border-b border-[#bbb]"></div>
<div class="h-[22px] flex items-center pt-[1px] bg-linear-to-b from-[#f6f6f4] to-[#e4e2de] text-[12.400px]">
  <span class="w-[417px] border-r border-[#ccc] h-full flex items-center whitespace-nowrap">Anordnung: Hertzsche Druckverteilung auf Substrat mit 1 Schicht</span>
  <span class="w-[67px] pl-[3px] border-r border-[#ccc] h-full flex items-center whitespace-nowrap">Schichten: 1</span>
  <span class="w-[154px] pl-[1px] border-r border-[#ccc] h-full flex items-center whitespace-nowrap">von Mises Spannung</span>
  <span class="w-[170px] pl-[1px] border-r border-[#ccc] h-full flex items-center whitespace-nowrap">Kontaktradius: 1,046 µm</span>
  <span class="pl-[1px] whitespace-nowrap">Kontaktdruck: 14,54 GPa</span>
</div>
<div class="h-[2px] flex"><span class="w-[45px] bg-[#333]"></span><span class="w-[340px] bg-[#e4e2de]"></span><span class="flex-1 bg-[#333]"></span></div>

<script>
// floor projection of the 3D plot, measured from the axes
const fx = (X, z) => 933 + 68.6 * X + 135 * z;
const fy = (X, z) => 891 + 20 * X - 45 * z;
const PX = 32, BASE = 0.83;
const { exp, cos, PI } = Math;

function stress(X, z) {
  if (z >= 1.97) return BASE + (1.87 + (2.5 - z) * 1.0) * exp(-((X / 2.2) ** 2));
  const x0 = X + 0.05;
  const g = z < 0.42 ? exp(-(((z - 0.42) / 0.28) ** 2)) : exp(-(((z - 0.42) / 0.9) ** 2));
  const main = 11.8 * exp(-((x0 / 1.3) ** 2)) * g;
  const wide = 1.8 * exp(-((X / 2.2) ** 2)) * exp(-(((z - 1.3) / 0.9) ** 2));
  const hump = 2.6 * exp(-((X / 1.45) ** 2)) * exp(-(((z - 1.92) / 0.28) ** 2));
  const skirt = 0.6 * exp(-(((z - 1.9) / 0.5) ** 2));
  let p;
  if (X < -1.05) p = 5 * exp((X + 1.05) * 1.4);
  else if (X > 1.05) p = 4.2 * exp(-(X - 1.05) * 1.3);
  else p = 0.9 + 0.4 * cos((X * PI) / 0.85) + 4.1 * exp(-(X + 1.05) / 0.07) + 3.5 * exp((X - 1.05) / 0.07);
  return BASE + main + wide + hump + skirt + p * exp(-z / 0.08);
}

function colour(v) {
  const t = Math.min(1, Math.max(0, (v - BASE) / 12.416));
  return t < 0.5 ? `rgb(${Math.round(t * 510)},0,0)` : `rgb(255,${Math.round((t - 0.5) * 510)},0)`;
}

let s = '';
const line = (a, b, c, d, col, w, dash) => `<line x1="${a}" y1="${b}" x2="${c}" y2="${d}" stroke="${col}" stroke-width="${w}"${dash ? ' stroke-dasharray="2 2"' : ''}/>`;
const text = (x, y, t, size, fill, extra = '') => `<text x="${x}" y="${y}" font-size="${size}" fill="${fill}" dominant-baseline="central" ${extra}>${t}</text>`;

// walls
for (let i = 0; i <= 12; i++) {
  const d = 32 * i;
  s += line(751, 446 + d, 1092, 334 + d, '#bcbcbc', 1, true);
  s += line(1092, 334 + d, 1453, 438 + d, '#bcbcbc', 1, true);
}
[[818, 414], [881.5, 393], [946.5, 372], [1010.5, 350], [1074.5, 329]].forEach(([x, t]) => {
  s += line(x, t, x, 838 - (x - 751) * 0.328, '#bdbdbd', 1.2);
});
[[1135.5, 337], [1204, 357], [1273, 376], [1342, 396], [1410, 416]].forEach(([x, t]) => {
  s += line(x, t, x, 723 + (x - 1092) * 0.296, '#bfbfbf', 1, true);
});
// floor
s += '<polygon points="751,838 1115,942 1453,830 1092,723" fill="#fff"/>';
for (let X = -2; X <= 2; X++) s += line(fx(X, 0), fy(X, 0), fx(X, 2.5), fy(X, 2.5), '#aaa', 1, true);
for (let z = 0.5; z <= 2; z += 0.5) s += line(fx(-2.64, z), fy(-2.64, z), fx(2.64, z), fy(2.64, z), '#aaa', 1);
s += line(751, 436, 751, 838, '#444', 2) + line(751, 838, 1115, 942, '#444', 1.6) + line(1115, 942, 1453, 830, '#444', 1.6);

// surface, painted back to front
const nx = 105, nz = 50, dx = 5.2 / nx, dz = 2.5 / nz;
const P = (i, j) => {
  const X = -2.6 + i * dx, z = j * dz;
  const v = stress(X, z);
  return [X, z, v, fx(X, z), fy(X, z) - (v - BASE) * PX];
};
let mesh = '';
for (let j = nz - 1; j >= 0; j--) {
  for (let i = 0; i < nx; i++) {
    const a = P(i, j), b = P(i + 1, j), c = P(i + 1, j + 1), d = P(i, j + 1);
    const pts = [a, b, c, d].map(q => q[3].toFixed(1) + ',' + q[4].toFixed(1)).join(' ');
    mesh += `<polygon points="${pts}" fill="${colour((a[2] + b[2] + c[2] + d[2]) / 4)}"/>`;
  }
}
s += `<g stroke="rgba(150,150,150,.5)" stroke-width=".6">${mesh}</g>`;

// axis labels
for (let i = 0; i < 13; i++) s += text(704, 818 - i * 31.8, (i + 1) + ',0', 15, '#000');
[['-2,0', 806.5, 864], ['-1,0', 875, 883.6], ['0,0', 943, 904], ['1,0', 1011, 923.6], ['2,0', 1080, 943]].forEach(l => { s += text(l[1], l[2], l[0], 15, '#000', 'text-anchor="middle"'); });
[['0,0', 1137, 954], ['0,5', 1201, 932], ['1,0', 1265, 911], ['1,5', 1330, 890], ['2,0', 1394, 867], ['2,5', 1458, 846]].forEach(l => { s += text(l[1], l[2], l[0], 15, '#000', 'text-anchor="middle"'); });
s += text(951, 931, 'X (µm)', 16, '#333', 'text-anchor="middle"') + text(1352, 907, 'Z (µm)', 16, '#333', 'text-anchor="middle"');
s += text(677, 597, 'Spannung (GPa)', 16, '#333', 'text-anchor="middle" transform="rotate(-90 677 597)"');

// titles and footers
s += text(1083, 253, 'Hertzsche Druckverteilung auf Substrat mit 1 Schicht', 13.2, '#000080', 'text-anchor="middle" font-weight="bold"');
s += text(1083, 271, 'von Mises Spannung', 13.2, '#000080', 'text-anchor="middle" font-weight="bold"');
s += text(1086, 1012, '2 µm TiN on Steel', 11.2, '#1818e8', 'text-anchor="middle" font-style="italic"');
s += text(1094, 1027, 'Normalkraft: 50 mN   Indenter Radius: 10 µm', 11.2, '#1818e8', 'text-anchor="middle" font-style="italic" xml:space="preserve"');

// legend
['13,246','12,818','12,39','11,962','11,534','11,106','10,678','10,249','9,821','9,393','8,965','8,537','8,109','7,681','7,253','6,825','6,397','5,969','5,541','5,113','4,685','4,257','3,829','3,401','2,973','2,545','2,117','1,688','1,26','0,832'].forEach((v, i) => {
  const y = 353.6 + i * 18.04;
  s += `<rect x="1573" y="${y}" width="14" height="14" fill="${colour(13.246 - i * 0.42815)}" stroke="#999" stroke-opacity=".6"/>`;
  s += text(1643, y + 7, v, 12, '#000', 'text-anchor="end"');
});
document.getElementById('plot').innerHTML = s;
</script>
</body>
</html>
